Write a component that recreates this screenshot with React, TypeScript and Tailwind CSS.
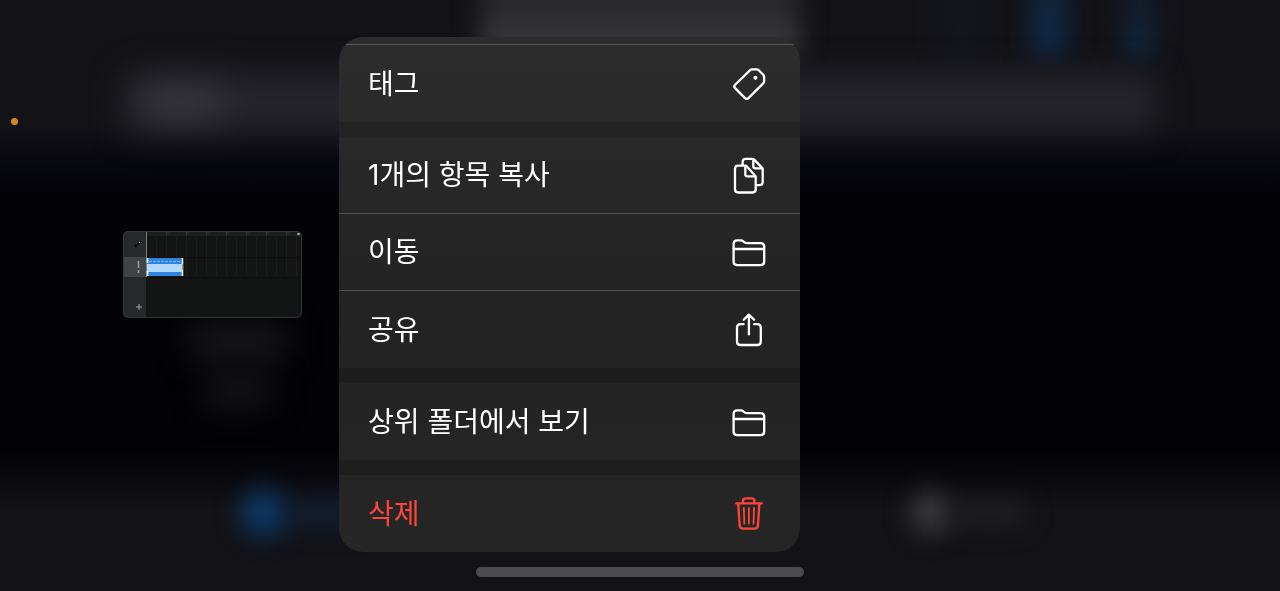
import type { ReactNode } from "react";
import clsx from "clsx";

function Icon({ children }: { children: ReactNode }) {
    return (
        <svg viewBox="0 0 40 40" className="h-10 w-10 shrink-0" fill="none" stroke="currentColor" strokeWidth="2.3" strokeLinecap="round" strokeLinejoin="round" aria-hidden="true">
            {children}
        </svg>
    );
}

function TagIcon() {
    return (
        <Icon>
            <path d="M21.2 6.2Q22.1 5.4 23.3 5.4H27.6Q28.9 5.4 29.8 6.3L34.2 10.8Q35.1 11.7 35.1 13V17.2Q35.1 18.5 34.2 19.4L19.4 34.1Q17.7 35.7 16 34.1L6.1 24.1Q4.4 22.4 6.1 20.7Z" />
            <circle cx="26.4" cy="13.7" r="2" fill="currentColor" stroke="none" />
        </Icon>
    );
}

function CopyIcon() {
    return (
        <Icon>
            <path d="M16 10.6H9.2Q6 10.6 6 13.8V34.3Q6 37.5 9.2 37.5H23.5Q26.7 37.5 26.7 34.3V22.5Q26.7 21.3 25.9 20.4L17.9 11.5Q17.1 10.6 16 10.6Z" />
            <path d="M16.3 11.1V19.3Q16.3 21.3 18.3 21.3H26.3" />
            <path d="M13.6 9.9V7Q13.6 3.8 16.8 3.8H23.2Q24.4 3.8 25.2 4.6L32.9 12.6Q33.7 13.5 33.7 14.7V26.9Q33.7 30.1 30.5 30.1H27.6" />
            <path d="M24.3 4.3V11.3Q24.3 13.3 26.3 13.3H33.2" />
        </Icon>
    );
}

function FolderIcon() {
    return (
        <Icon>
            <path d="M4.6 29.5V12Q4.6 8.4 8.2 8.4H11.8Q13.2 8.4 14.3 9.3L15.6 10.3Q16.7 11.2 18 11.2H31.6Q35.2 11.2 35.2 14.8V29.5Q35.2 33.1 31.6 33.1H8.2Q4.6 33.1 4.6 29.5Z" />
            <path d="M4.8 17H35" />
        </Icon>
    );
}

function ShareIcon() {
    return (
        <Icon>
            <path d="M14.6 14.2H11.6Q8 14.2 8 17.8V31.4Q8 35 11.6 35H28.2Q31.8 35 31.8 31.4V17.8Q31.8 14.2 28.2 14.2H25.2" />
            <path d="M19.9 24.4V4.6M14.7 9.8L19.9 4.6L25.1 9.8" />
        </Icon>
    );
}

function TrashIcon() {
    return (
        <Icon>
            <path d="M7.2 9.4H32.8" />
            <path d="M14 9V7Q14 4.4 16.6 4.4H22.8Q25.4 4.4 25.4 7V9" />
            <path d="M9.2 9.8L10.7 31.6Q11 34.6 14 34.6H25.6Q28.6 34.6 28.9 31.6L30.4 9.8" />
            <path d="M14.8 14L15.3 29.6M19.9 14V29.6M25 14L24.5 29.6" strokeWidth="1.8" />
        </Icon>
    );
}

type MenuItem = { label: string; icon: ReactNode; danger?: boolean };

const menuGroups: MenuItem[][] = [
    [{ label: "태그", icon: <TagIcon /> }],
    [
        { label: "1개의 항목 복사", icon: <CopyIcon /> },
        { label: "이동", icon: <FolderIcon /> },
        { label: "공유", icon: <ShareIcon /> },
    ],
    [{ label: "상위 폴더에서 보기", icon: <FolderIcon /> }],
    [{ label: "삭제", icon: <TrashIcon />, danger: true }],
];

function ContextMenu() {
    return (
        <div role="menu" className="flex w-[461px] flex-col overflow-hidden rounded-3xl bg-linear-to-b from-[#272728] via-[#1c1c1d] to-[#1f1f20]">
            <div className="h-2 border-b border-[#565657] bg-white/3" />
            <div className="flex flex-col gap-[15px]">
                {menuGroups.map((group, i) => (
                    <div key={i} role="group" className="divide-y divide-[#515152] bg-white/3">
                        {group.map((item) => (
                            <button key={item.label} role="menuitem" className={clsx("flex h-[77px] w-full items-center justify-between pr-[31px] pl-[29px] text-[28px] leading-10", item.danger ? "text-[#ff453a]" : "text-white")}>
                                <span>{item.label}</span>
                                {item.icon}
                            </button>
                        ))}
                    </div>
                ))}
            </div>
        </div>
    );
}

function ProjectThumbnail() {
    return (
        <svg viewBox="0 0 179 87" className="h-[87px] w-[179px] shrink-0" role="img" aria-label="project">
            <clipPath id="thumb">
                <rect width="179" height="87" rx="5" />
            </clipPath>
            <g clipPath="url(#thumb)">
                <rect width="179" height="87" fill="#121514" />
                <rect x="23" width="156" height="5" fill="#1c1f1f" />
                <rect width="23" height="87" fill="#25292a" />
                <rect y="26" width="23" height="20" fill="#414445" />
                {[33, 43, 53, 63, 73, 83, 93, 103, 113, 123, 133, 143, 153, 163, 173].map((x) => (
                    <path key={x} d={`M${x}.5 1V46`} stroke="#1a1d1d" />
                ))}
                {[43, 63, 83, 103, 123, 143, 163].map((x) => (
                    <path key={x} d={`M${x} 2h3M${x}.5 1v4`} stroke="#333636" />
                ))}
                <path d="M23 26.5H179M23 46.5H179" stroke="#0e1010" />
                <path d="M23.5 0V46" stroke="#7c8080" />
                <rect x="24" y="27" width="36" height="18" fill="#2f84dd" />
                <rect x="24" y="33" width="36" height="8" fill="#b1d7fb" />
                <path d="M26 30.5h31" stroke="#79b4f2" strokeDasharray="3 1" />
                <path d="M24.5 27v5M24.5 40v5M59.5 27v18" stroke="#fff" strokeWidth="1.5" />
                <path d="M59.5 33v6" stroke="#92999f" />
                <path d="M12 16l4-4M12 13.5l2 2" stroke="#090b0b" strokeWidth="2" />
                <path d="M16 12l1-1" stroke="#a3a6a6" />
                <path d="M15.5 30v7M15.5 39v3" stroke="#9a9d9d" strokeWidth="1.5" />
                <path d="M13 76h6M16 73v6" stroke="#a4a6a6" />
                <circle cx="175.5" cy="3" r="1.3" fill="#b0b2b2" />
            </g>
            <rect x="0.5" y="0.5" width="178" height="86" rx="5" fill="none" stroke="#333636" />
        </svg>
    );
}

// blurred file browser behind the menu
function Backdrop() {
    return (
        <div aria-hidden="true" className="absolute inset-0 -z-10 flex flex-col justify-between overflow-hidden bg-[#020207]">
            <div className="flex h-[200px] flex-col gap-5 bg-linear-to-b from-[#131217] from-[62%] to-[#020207] px-[125px]">
                <div className="-mt-8 flex h-[86px] items-stretch justify-between pl-[355px]">
                    <div className="w-[320px] bg-linear-to-b from-[#29282d] from-50% to-[#414145] blur-md" />
                    <div className="flex gap-14">
                        <div className="w-7 bg-[#13202b] opacity-50 blur-lg" />
                        <div className="w-9 bg-linear-to-b from-[#112433] to-[#0f2c50] blur-md" />
                        <div className="w-8 bg-linear-to-b from-[#141c2b] from-50% to-[#0e2d47] blur-md" />
                    </div>
                </div>
                <div className="flex h-14 items-center bg-[#26252b] px-4 blur-lg">
                    <div className="h-9 w-20 bg-[#3a3a41] blur-md" />
                </div>
            </div>
            <div className="flex flex-1 flex-col items-center gap-4 self-start pt-[126px] pl-[190px]">
                <div className="h-8 w-[96px] bg-[#1b1a1f] blur-lg" />
                <div className="h-8 w-16 bg-[#17161b] blur-lg" />
            </div>
            <div className="flex h-[140px] items-center justify-between bg-linear-to-b from-transparent to-[#131217] to-[42%] pr-[255px] pb-4 pl-[240px]">
                <div className="flex items-center">
                    <div className="h-12 w-12 rounded-full bg-[#0c3864] blur-md" />
                    <div className="h-7 w-20 bg-[#131e32] blur-md" />
                </div>
                <div className="flex items-center">
                    <div className="h-11 w-11 rounded-full bg-[#37373c] blur-md" />
                    <div className="h-7 w-18 bg-[#1e1e23] blur-md" />
                </div>
            </div>
        </div>
    );
}

export default function App() {
    return (
        <div className="relative isolate flex min-h-screen flex-col overflow-hidden font-[Inter,'Noto_Sans_CJK_KR',sans-serif]">
            <Backdrop />
            <span className="absolute top-[118px] left-[11px] h-[7px] w-[7px] rounded-full bg-[#d38a1c]" />
            <main className="flex items-start gap-[37px] pt-[37px] pl-[123px]">
                <div className="pt-[194px]">
                    <ProjectThumbnail />
                </div>
                <ContextMenu />
            </main>
            <div className="mx-auto mt-[15px] h-[10px] w-[328px] rounded-full bg-[#4c4c4f]" />
        </div>
    );
}
